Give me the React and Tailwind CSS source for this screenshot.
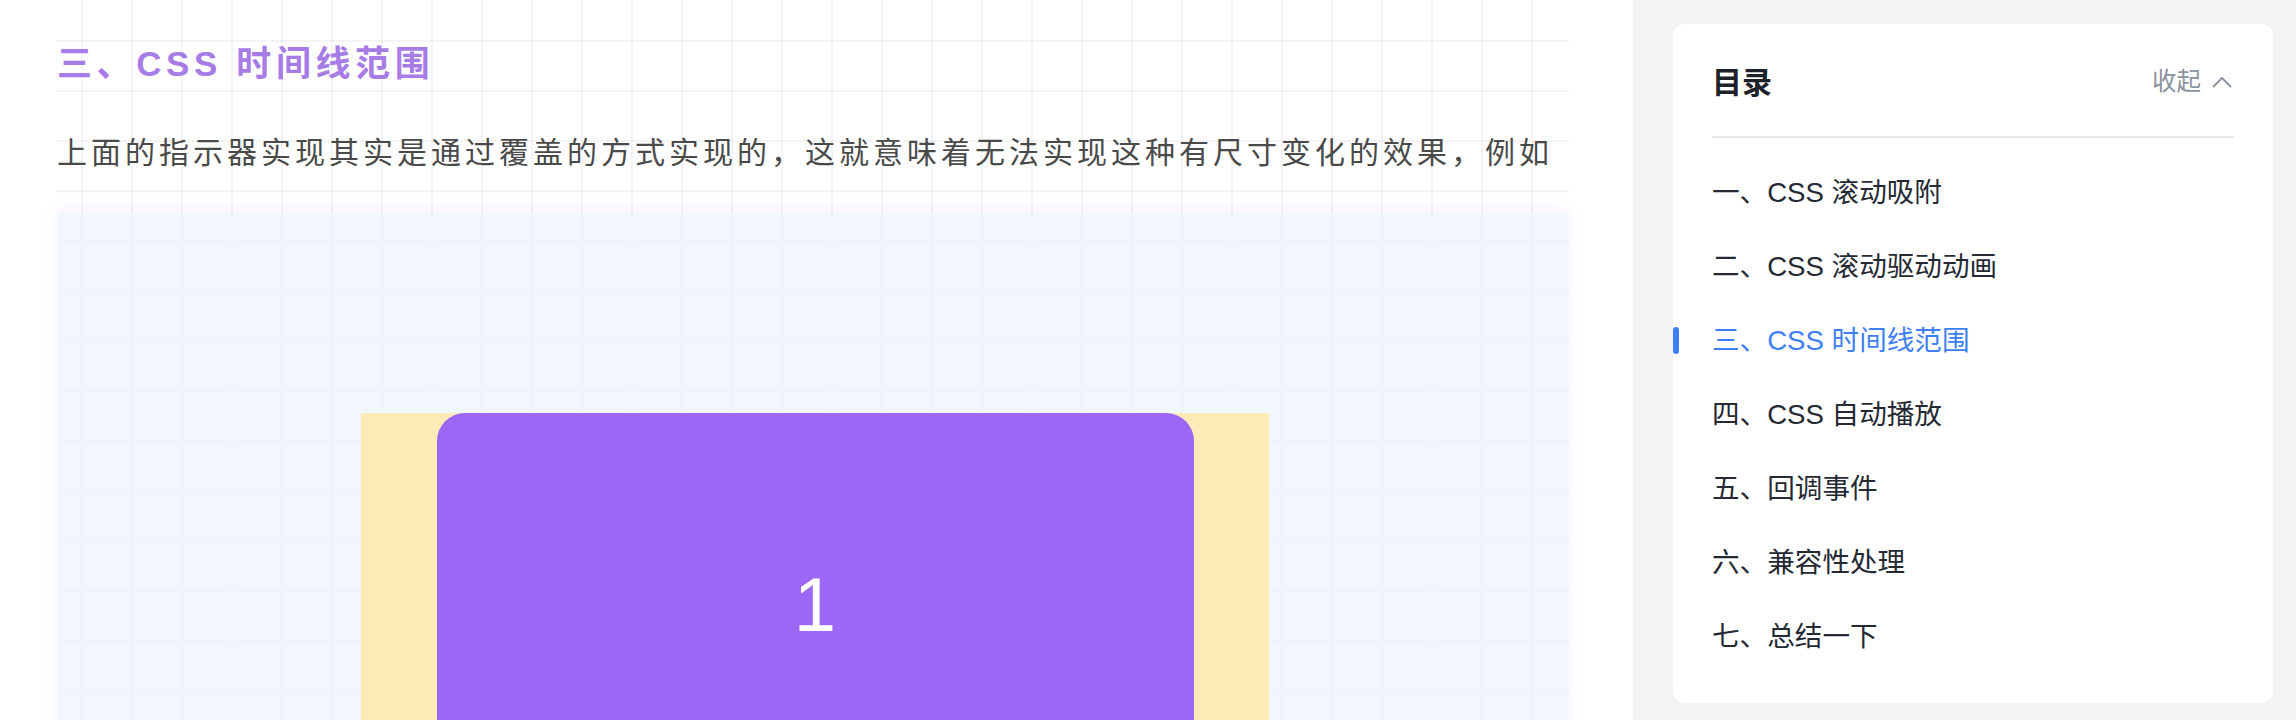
import React from "react";

const toc = [
  "一、CSS 滚动吸附",
  "二、CSS 滚动驱动动画",
  "三、CSS 时间线范围",
  "四、CSS 自动播放",
  "五、回调事件",
  "六、兼容性处理",
  "七、总结一下",
];

export default function App() {
  return (
    <div className="flex h-[720px] w-[2296px] overflow-hidden bg-white [font-family:'Liberation_Sans','Noto_Sans_CJK_SC',sans-serif]">
      {/* main article column */}
      <div className="w-[1633px] shrink-0 pl-[57px] pr-[64px]">
        <div className="h-[720px] pt-[39px] [background-image:linear-gradient(to_right,rgba(0,0,0,0.045)_2px,transparent_2px),linear-gradient(to_bottom,rgba(0,0,0,0.045)_2px,transparent_2px)] [background-size:50px_50px] [background-position:24px_40px]">
          <h2 className="text-[35px] font-bold leading-[50px] tracking-[4.6px] text-[#a87ce7]">
            三、CSS 时间线范围
          </h2>
          <p className="mt-[39px] whitespace-nowrap text-[30px] leading-[50px] tracking-[4px] text-[#4a4a4a]">
            上面的指示器实现其实是通过覆盖的方式实现的，这就意味着无法实现这种有尺寸变化的效果，例如
          </p>
          <div className="mt-[35px] h-[600px] bg-[rgba(238,244,254,0.75)] pt-[200px] shadow-[0_-6px_14px_rgba(160,110,240,0.08)]">
            <div className="flex justify-center pl-[4px]">
              <div className="flex h-[500px] w-[908px] justify-center bg-[#fcebb7]">
                <div className="flex h-[383px] w-[757px] items-center justify-center rounded-t-[28px] bg-[#9d67f5] text-[76px] leading-none text-white">
                  1
                </div>
              </div>
            </div>
          </div>
        </div>
      </div>

      {/* sidebar */}
      <div className="w-[663px] shrink-0 bg-[#f2f3f5] pl-[40px] pr-[23px] pt-[24px]">
        <div className="h-[679px] w-[600px] rounded-[12px] bg-white px-[39px] pt-[28px]">
          <div className="flex h-[60px] items-center justify-between pr-[2px]">
            <span className="text-[30px] font-bold text-[#1d2129]">目录</span>
            <span className="flex items-center gap-[11px] text-[24.5px] text-[#8a919f]">
              收起
              <svg width="20" height="12" viewBox="0 0 20 12" fill="none" stroke="currentColor" strokeWidth="1.8" strokeLinecap="round" strokeLinejoin="round">
                <polyline points="1.5,10.5 10,2 18.5,10.5" />
              </svg>
            </span>
          </div>
          <div className="mt-[24px] h-[2px] bg-[#e4e6eb]" />
          <ul className="mt-[18px]">
            {toc.map((t, i) => (
              <li
                key={t}
                className={
                  i === 2
                    ? "relative flex h-[74px] items-center text-[27.6px] text-[#3e7ff7]"
                    : "relative flex h-[74px] items-center text-[27.6px] text-[#252933]"
                }
              >
                {i === 2 && (
                  <span className="absolute left-[-39px] top-[23px] h-[27px] w-[6px] rounded-full bg-[#3e7ff7]" />
                )}
                {t}
              </li>
            ))}
          </ul>
        </div>
      </div>
    </div>
  );
}
